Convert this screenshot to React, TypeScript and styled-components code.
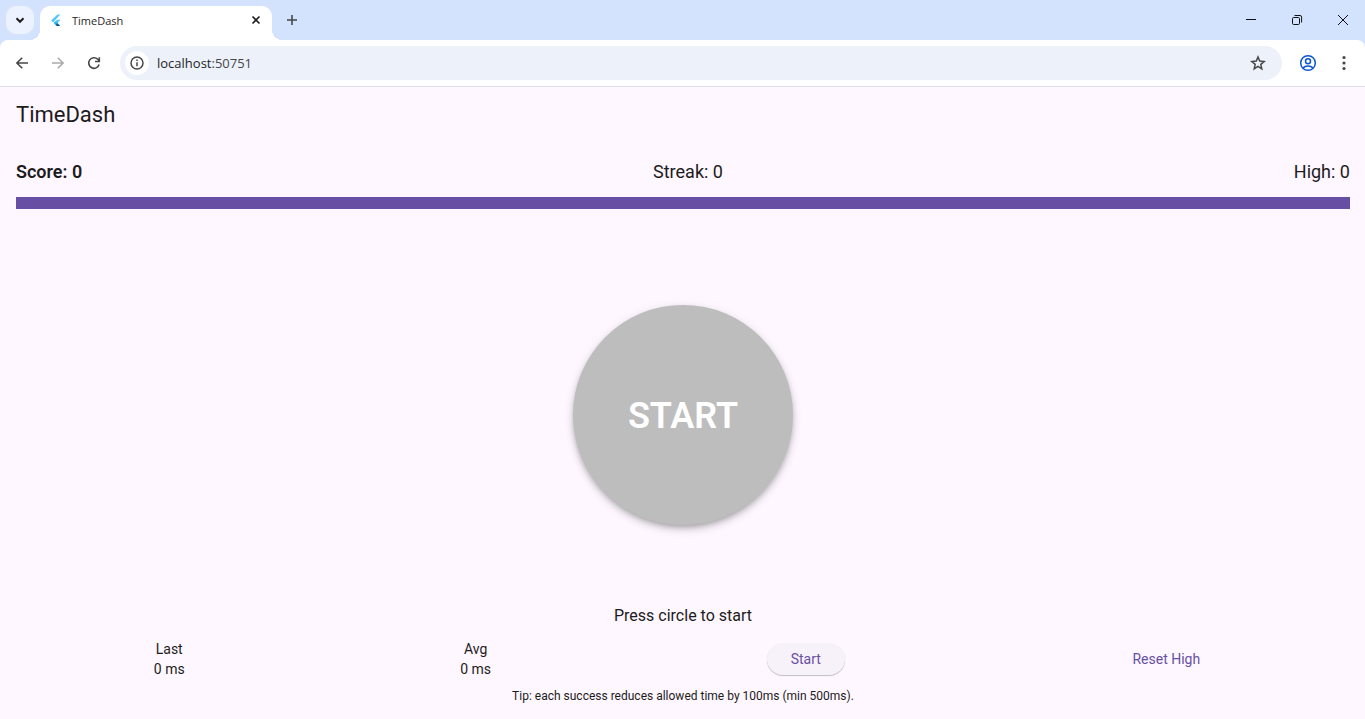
import React from "react";
import styled, { createGlobalStyle } from "styled-components";

const GlobalStyle = createGlobalStyle`
  * { box-sizing: border-box; }
  body { margin: 0; font-family: Roboto, sans-serif; color: #1d1b20; background: #fef7ff; }
  button, input { font: inherit; color: inherit; border: 0; padding: 0; background: none; }
  button { cursor: pointer; }
`;

const Window = styled.div`
  min-height: 100vh;
  display: flex;
  flex-direction: column;
`;

const TabStrip = styled.div`
  display: flex;
  height: 40px;
  padding-left: 6px;
  background: #d3e3fd;
`;

const TabSearch = styled.button`
  display: grid;
  place-items: center;
  width: 28px;
  height: 28px;
  margin: 6px 6px 0 0;
  border-radius: 10px;
  background: #ecf3fe;
`;

const Tab = styled.div`
  position: relative;
  display: flex;
  align-items: center;
  width: 232px;
  height: 34px;
  margin-top: 6px;
  padding: 0 8px 6px 8px;
  border-radius: 10px 10px 0 0;
  background: #fff;

  &::before, &::after {
    content: "";
    position: absolute;
    bottom: 0;
    width: 10px;
    height: 10px;
  }
  &::before { right: 100%; background: radial-gradient(circle at 0 0, transparent 10px, #fff 10px); }
  &::after { left: 100%; background: radial-gradient(circle at 100% 0, transparent 10px, #fff 10px); }
`;

const TabTitle = styled.span`
  flex: 1;
  margin-left: 8px;
  font: 11px "Open Sans", sans-serif;
  color: #1f1f1f;
`;

const IconButton = styled.button<{ $size: number; $color?: string }>`
  display: grid;
  place-items: center;
  flex: none;
  width: ${(p) => p.$size}px;
  height: ${(p) => p.$size}px;
  color: ${(p) => p.$color ?? "#474747"};
`;

const NewTab = styled(IconButton)`
  margin: 6px auto 0 6px;
`;

const Caption = styled.button`
  display: grid;
  place-items: center;
  width: 46px;
  height: 40px;
  color: #111;
`;

const CaptionGroup = styled.div`
  display: flex;
`;

const ToolbarBand = styled.div`
  background: linear-gradient(#d3e3fd 10px, #fff 10px);
`;

const Toolbar = styled.div`
  display: flex;
  align-items: center;
  height: 47px;
  padding: 0 3px 0 4px;
  border-bottom: 1px solid #dfe0e3;
  border-radius: 8px 8px 0 0;
  background: #fff;
`;

const Nav = styled.div`
  display: flex;
`;

const Address = styled.div`
  display: flex;
  flex: 1;
  align-items: center;
  height: 34px;
  margin: 0 8px;
  padding: 0 6px 0 5px;
  border-radius: 17px;
  background: #ecf1fa;
`;

const SiteInfo = styled(IconButton)`
  border-radius: 50%;
  background: #fff;
`;

const Url = styled.a`
  flex: 1;
  margin-left: 8px;
  font: 13px "Open Sans", sans-serif;
  color: #1f1f1f;
  text-decoration: none;
`;

const Port = styled.span`
  color: #474747;
`;

const AppBar = styled.header`
  display: flex;
  align-items: center;
  height: 56px;
  padding: 0 16px;
`;

const Title = styled.h1`
  margin: 0;
  font-size: 22px;
  line-height: 28px;
  font-weight: 400;
`;

const Body = styled.main`
  flex: 1;
  display: flex;
  flex-direction: column;
  padding: 16px 15px 15px 16px;
`;

const Scores = styled.div`
  display: flex;
  justify-content: space-between;
  margin-bottom: 12px;
  font-size: 18px;
  line-height: 26px;
`;

const Score = styled.span<{ $strong?: boolean }>`
  font-weight: ${(p) => (p.$strong ? 600 : 400)};
`;

const TimeBar = styled.div`
  height: 12px;
  background: #6750a4;
`;

const Stage = styled.div`
  flex: 1;
  display: grid;
  place-items: center;
  padding-top: 16px;
`;

const Circle = styled.button`
  width: 220px;
  height: 220px;
  padding-top: 2px;
  border-radius: 50%;
  background: #bdbdbd;
  color: #fff;
  font-size: 36px;
  font-weight: 600;
  box-shadow: 0 3px 5px -1px rgba(0, 0, 0, 0.2), 0 5px 8px rgba(0, 0, 0, 0.14), 0 1px 12px rgba(0, 0, 0, 0.06);
`;

const Prompt = styled.p`
  margin: 0 0 11px;
  font-size: 16px;
  line-height: 24px;
  text-align: center;
`;

const Footer = styled.div`
  display: flex;
  align-items: center;
  justify-content: space-around;
  font-size: 14px;
  line-height: 20px;
`;

const Stat = styled.div`
  text-align: center;
`;

const Action = styled.button<{ $raised?: boolean }>`
  height: 32px;
  padding: 0 ${(p) => (p.$raised ? 24 : 12)}px;
  border-radius: 16px;
  color: #6750a4;
  background: ${(p) => (p.$raised ? "#f7f2fa" : "transparent")};
  box-shadow: ${(p) => (p.$raised ? "0 1px 1px rgba(0, 0, 0, 0.24)" : "none")};
`;

const Tip = styled.p`
  margin: 9px 0 0;
  font-size: 12px;
  line-height: 16px;
  text-align: center;
`;

type IconProps = { size?: number; children: React.ReactNode; width?: number };
const Icon = ({ size = 16, children, width = 2 }: IconProps) => (
  <svg width={size} height={size} viewBox={`0 0 ${size} ${size}`} fill="none" stroke="currentColor" strokeWidth={width} aria-hidden="true">
    {children}
  </svg>
);

const FlutterLogo = () => (
  <svg width="16" height="16" viewBox="0 0 16 16" aria-hidden="true">
    <path d="M9.500 2.500 3.200 8.500l1.900 1.900L12.300 2.500z" fill="#54c5f8" />
    <path d="M9 7.800 5.800 11l1.900 1.900 4.800-5.100z" fill="#54c5f8" />
    <path d="m7.600 9.300 1.800 1.800-1.800 1.800-1.800-1.800z" fill="#29b6f6" />
    <path d="m7.600 12.900 1.800-1.800 2.900 2.900H8.700z" fill="#01579b" />
  </svg>
);

export default function App() {
  return (
    <Window>
      <GlobalStyle />
      <TabStrip>
        <TabSearch aria-label="Search tabs">
          <Icon><path d="m4.500 6.300 3.500 3.500 3.500-3.500" /></Icon>
        </TabSearch>
        <Tab>
          <FlutterLogo />
          <TabTitle>TimeDash</TabTitle>
          <IconButton $size={16} $color="#1f1f1f" aria-label="Close tab">
            <Icon width={1.6}><path d="m4.500 4.500 7 7m0-7-7 7" /></Icon>
          </IconButton>
        </Tab>
        <NewTab $size={28} aria-label="New tab">
          <Icon width={1.6}><path d="M8 3v10M3 8h10" /></Icon>
        </NewTab>
        <CaptionGroup>
          <Caption aria-label="Minimize"><Icon width={1}><path d="M4 7.500h10" /></Icon></Caption>
          <Caption aria-label="Restore">
            <Icon width={1}>
              <rect x="4.500" y="5.500" width="7" height="7" rx="1.200" />
              <path d="M6.500 3.500H12a1.600 1.600 0 0 1 1.600 1.600v5.400" />
            </Icon>
          </Caption>
          <Caption aria-label="Close"><Icon width={1}><path d="m4 3 10 10M14 3 4 13" /></Icon></Caption>
        </CaptionGroup>
      </TabStrip>
      <ToolbarBand>
        <Toolbar>
          <Nav>
            <IconButton $size={36} aria-label="Back">
              <Icon width={1.6}><path d="M14 8H3M8.200 2.700 2.900 8l5.300 5.300" /></Icon>
            </IconButton>
            <IconButton $size={36} $color="#ababab" aria-label="Forward">
              <Icon width={1.6}><path d="M2 8h11M7.800 2.700 13.100 8l-5.300 5.300" /></Icon>
            </IconButton>
            <IconButton $size={36} aria-label="Reload">
              <Icon width={1.6}>
                <path d="M13.100 9.500A5.300 5.300 0 1 1 11.800 4.300L13.300 6" />
                <path d="M13.300 2.200v4.300H9" />
              </Icon>
            </IconButton>
          </Nav>
          <Address>
            <SiteInfo $size={24} aria-label="Site information">
              <Icon width={1.5}>
                <circle cx="8" cy="8" r="6" />
                <path d="M8 7.200v4M8 4.500v1.600" />
              </Icon>
            </SiteInfo>
            <Url href="#">localhost<Port>:50751</Port></Url>
            <IconButton $size={36} aria-label="Bookmark">
              <Icon width={1.5}>
                <path d="m8 2 1.700 4.100 4.500.4-3.400 2.900 1 4.400L8 11.400l-3.800 2.400 1-4.400-3.400-2.900 4.500-.4z" />
              </Icon>
            </IconButton>
          </Address>
          <IconButton $size={36} $color="#0b57d0" aria-label="Profile">
            <Icon size={18} width={1.5}>
              <circle cx="9" cy="9" r="7.300" />
              <circle cx="9" cy="7.300" r="2.500" />
              <path d="M4 14c1.200-1.400 3-2 5-2s3.800.6 5 2" />
            </Icon>
          </IconButton>
          <IconButton $size={36} aria-label="Menu">
            <Icon>
              <g fill="currentColor" stroke="none">
                <circle cx="8" cy="2.500" r="1.600" /><circle cx="8" cy="8" r="1.600" /><circle cx="8" cy="13.500" r="1.600" />
              </g>
            </Icon>
          </IconButton>
        </Toolbar>
      </ToolbarBand>
      <AppBar><Title>TimeDash</Title></AppBar>
      <Body>
        <Scores>
          <Score $strong>Score: 0</Score>
          <Score>Streak: 0</Score>
          <Score>High: 0</Score>
        </Scores>
        <TimeBar role="progressbar" aria-label="Time left" aria-valuenow={100} />
        <Stage><Circle>START</Circle></Stage>
        <Prompt>Press circle to start</Prompt>
        <Footer>
          <Stat>Last<br />0 ms</Stat>
          <Stat>Avg<br />0 ms</Stat>
          <Action $raised>Start</Action>
          <Action>Reset High</Action>
        </Footer>
        <Tip>Tip: each success reduces allowed time by 100ms (min 500ms).</Tip>
      </Body>
    </Window>
  );
}
